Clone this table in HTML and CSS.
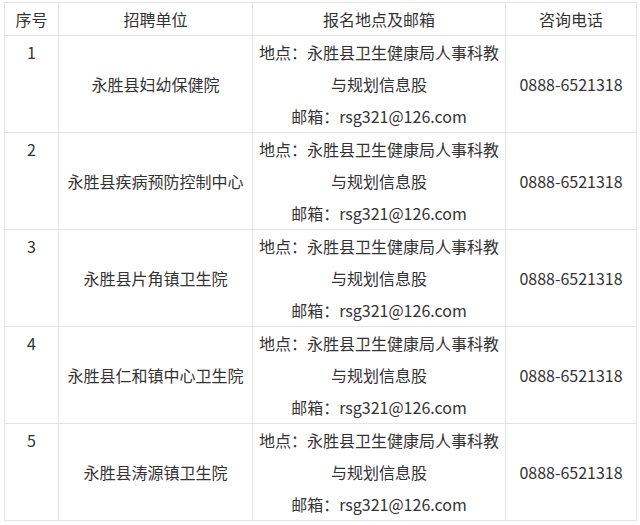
FILE: index.html
```html
<!DOCTYPE html>
<html lang="zh-CN">
<head>
  <meta charset="UTF-8" />
  <meta name="viewport" content="width=device-width, initial-scale=1.0" />
  <title>招聘单位</title>
  <link rel="stylesheet" href="styles.css">
</head>
<body>

  <main class="wrap">
    <table class="tabla">
      <colgroup>
        <col class="col-num" />
        <col class="col-unidad" />
        <col class="col-lugar" />
        <col class="col-tel" />
      </colgroup>
      <thead>
        <tr>
          <th>序号</th>
          <th>招聘单位</th>
          <th>报名地点及邮箱</th>
          <th>咨询电话</th>
        </tr>
      </thead>
      <tbody>
        <tr>
          <td class="num">1</td>
          <td>永胜县妇幼保健院</td>
          <td>地点：永胜县卫生健康局人事科教<br>与规划信息股<br>邮箱：rsg321@126.com</td>
          <td>0888-6521318</td>
        </tr>
        <tr>
          <td class="num">2</td>
          <td>永胜县疾病预防控制中心</td>
          <td>地点：永胜县卫生健康局人事科教<br>与规划信息股<br>邮箱：rsg321@126.com</td>
          <td>0888-6521318</td>
        </tr>
        <tr>
          <td class="num">3</td>
          <td>永胜县片角镇卫生院</td>
          <td>地点：永胜县卫生健康局人事科教<br>与规划信息股<br>邮箱：rsg321@126.com</td>
          <td>0888-6521318</td>
        </tr>
        <tr>
          <td class="num">4</td>
          <td>永胜县仁和镇中心卫生院</td>
          <td>地点：永胜县卫生健康局人事科教<br>与规划信息股<br>邮箱：rsg321@126.com</td>
          <td>0888-6521318</td>
        </tr>
        <tr>
          <td class="num">5</td>
          <td>永胜县涛源镇卫生院</td>
          <td>地点：永胜县卫生健康局人事科教<br>与规划信息股<br>邮箱：rsg321@126.com</td>
          <td>0888-6521318</td>
        </tr>
      </tbody>
    </table>
  </main>

</body>
</html>
```

FILE: styles.css
```css
:root {
  --color-borde: #e3e3e3;
  --color-texto: #333;
}

body {
  margin: 0;
  background: #fff;
  color: var(--color-texto);
  font-family: "Noto Sans CJK SC", "Microsoft YaHei", sans-serif;
  font-size: 16px;
}

.wrap {
  padding: 2px 4px;
}

.tabla {
  border-collapse: collapse;
  table-layout: fixed;
  width: 632px;
}

.col-num { width: 54px; }
.col-unidad { width: 194px; }
.col-lugar { width: 253px; }
.col-tel { width: 131px; }

.tabla th,
.tabla td {
  border: 1px solid var(--color-borde);
  padding: 0;
  line-height: 32px;
  font-weight: normal;
  text-align: center;
  vertical-align: middle;
}

.tabla td.num {
  vertical-align: top;
}
```
